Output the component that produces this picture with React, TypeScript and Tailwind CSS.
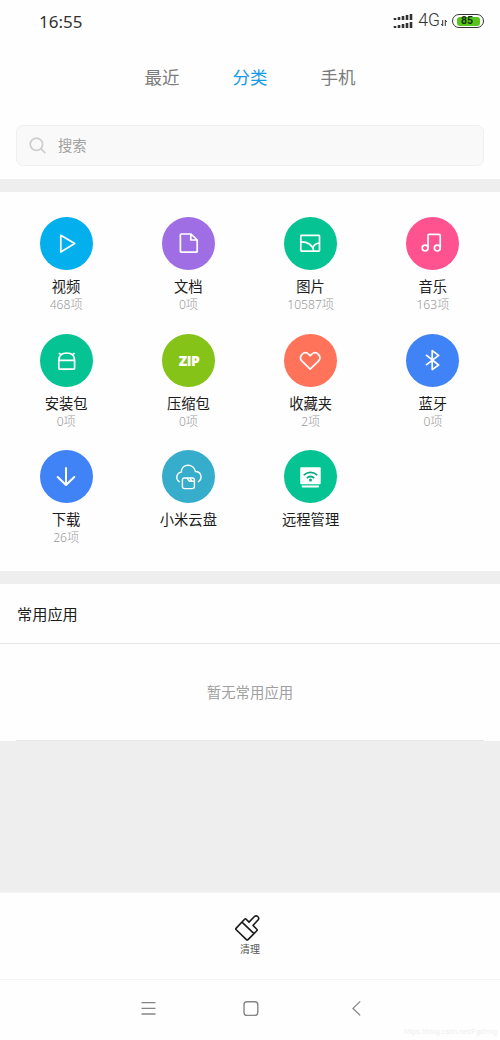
import type { ReactNode } from 'react';

type Category = { label: string; count?: string; color: string; icon: ReactNode };

const categories: Category[] = [
  {
    label: '视频', count: '468项', color: 'bg-[#03afec]',
    icon: <path d="M20.8 18.3v16.8L34.7 26.6z" />,
  },
  {
    label: '文档', count: '0项', color: 'bg-[#9f6ee4]',
    icon: <path d="M29 17H19.2a.8.8 0 0 0-.8.8v16.6a.8.8 0 0 0 .8.8H34.4a.8.8 0 0 0 .8-.8V23zM28.8 17v6H35" />,
  },
  {
    label: '图片', count: '10587项', color: 'bg-[#05c393]',
    icon: (
      <>
        <rect x="16.8" y="18.3" width="18.7" height="15.8" rx=".8" />
        <path d="M17 24.8c7 0 11.7 3.4 12.8 9.2M29 30.6c1-3 3-4.2 6.5-4.4" />
      </>
    ),
  },
  {
    label: '音乐', count: '163项', color: 'bg-[#ff5390]',
    icon: (
      <>
        <circle cx="19.1" cy="31.1" r="2.9" />
        <circle cx="31.3" cy="31.1" r="2.9" />
        <path d="M22 31V18.5q0-1.2 1.2-1.2h9.8q1.2 0 1.2 1.2V31" />
      </>
    ),
  },
  {
    label: '安装包', count: '0项', color: 'bg-[#05c393]',
    icon: <path d="M18.8 26.4h15.8v7.9a.9.9 0 0 1-.9.9h-14a.9.9 0 0 1-.9-.9zC18.8 21.5 22 19 26.7 19s7.9 2.5 7.9 7.4M21.7 21.1l-2.9-2M31.7 21.1l2.9-2" />,
  },
  {
    label: '压缩包', count: '0项', color: 'bg-[#85c318]',
    icon: (
      <text x="27.2" y="31.5" textAnchor="middle" fill="white" stroke="none" fontSize="13.8" fontWeight="800" fontFamily="Open Sans, Noto Sans, sans-serif" textLength="20.8">ZIP</text>
    ),
  },
  {
    label: '收藏夹', count: '2项', color: 'bg-[#ff735b]',
    icon: <path d="M26.2 35.2 18 27.1C13.8 22.4 20.1 16 24.8 20.3l1.4 1.4 1.4-1.4C32.4 16 38.6 22.4 34.4 27.1z" />,
  },
  {
    label: '蓝牙', count: '0项', color: 'bg-[#4083f6]',
    icon: <path d="M20 20.9 32.6 31 26.2 35.6V16.6l6.4 4.8L20 31.2" />,
  },
  {
    label: '下载', count: '26项', color: 'bg-[#4083f6]',
    icon: <path strokeWidth="2" strokeLinecap="round" d="M26 18v16.5M17.7 27l8.3 8 8.3-8" />,
  },
  {
    label: '小米云盘', color: 'bg-[#35adcb]',
    icon: (
      <g strokeWidth="1.4">
        <path strokeLinecap="round" d="M17.2 31.7c-4-3-2.7-8.8 2-9.6.5-9 12.5-9 14.3-.6 5.8.1 7.5 7 2.9 10.2" />
        <rect x="20.4" y="28" width="12" height="10.6" rx="2" />
        <path d="M25 28.2l2.4 3h4.8M27.8 28.2l2 3" />
      </g>
    ),
  },
  {
    label: '远程管理', color: 'bg-[#05c393]',
    icon: (
      <>
        <rect x="16.2" y="17.3" width="20.5" height="17" rx="1" fill="white" stroke="none" />
        <path d="M17.7 35.4H35v1.2a1 1 0 0 1-1 1H18.7a1 1 0 0 1-1-1z" fill="white" stroke="none" />
        <path className="stroke-[#05a982]" d="M19.7 25.1q6.8-5.4 13.6 0M22.8 28q3.7-3 7.4 0" />
        <circle cx="26.5" cy="30" r="1.5" fill="#05a982" stroke="none" />
      </>
    ),
  },
];

function SignalBars() {
  return (
    <svg className="h-4 w-5" viewBox="0 0 20 16" fill="#333">
      {[0, 1, 2, 3, 4].map((i) => (
        <g key={i}>
          <rect x={0.7 + i * 4} y={5 - i} width="2.6" height={2 + i} />
          <rect x={0.7 + i * 4} y={13 - i} width="2.6" height={2 + i} />
        </g>
      ))}
    </svg>
  );
}

function StatusBar() {
  return (
    <header className="flex h-[42px] items-center pl-[39px] pr-[16px] text-[#333]">
      <span className="text-[17px] leading-none font-['Noto_Sans',sans-serif]">16:55</span>
      <div className="ml-auto flex items-center">
        <SignalBars />
        <span className="ml-[5px] text-[17.5px] font-light leading-none font-['Roboto',sans-serif]">4G</span>
        <svg className="ml-[1px] mt-1 h-[6px] w-[6px]" viewBox="0 0 6 6" fill="none" stroke="#333" strokeWidth="1">
          <path d="M1.7 0v6L.3 4M4.3 6V0l1.4 2" />
        </svg>
        <div className="ml-[5px] flex h-[14px] w-[32px] items-center justify-center rounded-full border-[1.5px] border-[#333]">
          <div className="flex h-[9px] w-[23px] items-center justify-center rounded-[3px] bg-[#58c51e] pr-[2px] text-[10.5px] font-bold leading-none text-[#15300c] font-['Roboto',sans-serif]">85</div>
        </div>
      </div>
    </header>
  );
}

export default function App() {
  return (
    <div className="flex h-[1040px] w-[500px] flex-col overflow-hidden bg-[#fefefe] font-['Noto_Sans_CJK_SC',sans-serif]">
      <StatusBar />

      <nav className="flex h-[70px] justify-center gap-[53px] text-[17.5px] leading-[70px] text-[#7c7c7c]">
        <span>最近</span>
        <span className="text-[#189ae8]">分类</span>
        <span>手机</span>
      </nav>

      <div className="h-[67px] px-4 pt-[13px]">
        <div className="flex h-[41px] items-center rounded-[7px] border border-[#efefef] bg-[#f9f9f9] pl-3 text-[14.3px] text-[#a0a0a0]">
          <svg className="-mt-px h-[17px] w-[17px]" viewBox="0 0 16 16" fill="none" stroke="#cecece" strokeWidth="1.6">
            <circle cx="7" cy="6.8" r="5.8" />
            <path d="m11.2 11 4.2 4.2" />
          </svg>
          <span className="ml-[12px] -mt-px">搜索</span>
        </div>
      </div>

      <div className="h-[13px] bg-[#eee]" />

      <section className="grid h-[379px] auto-rows-[116.6px] grid-cols-4 pl-[5px] pr-[6px] pt-[25px]">
        {categories.map((c) => (
          <div key={c.label} className="flex flex-col items-center">
            <div className={`h-[53px] w-[53px] rounded-full ${c.color}`}>
              <svg className="h-full w-full" viewBox="0 0 53 53" fill="none" stroke="white" strokeWidth="1.7" strokeLinejoin="round">
                {c.icon}
              </svg>
            </div>
            <div className="mt-[6px] text-[14.3px] leading-5 text-[#1c1c1c]">{c.label}</div>
            {c.count && <div className="mt-px text-[12.1px] font-light leading-4 text-[#999] font-['Noto_Sans','Noto_Sans_CJK_SC',sans-serif]">{c.count}</div>}
          </div>
        ))}
      </section>

      <div className="h-[13px] bg-[#eee]" />

      <h2 className="h-[60px] border-b border-[#e6e6e6] pl-[17px] text-[15.2px] font-normal leading-[59px] text-[#1c1c1c]">常用应用</h2>
      <div className="h-[97px] px-4">
        <div className="h-full border-b border-[#e6e6e6] text-center text-[14.4px] leading-[96px] text-[#a0a0a0]">暂无常用应用</div>
      </div>
      <div className="h-[151px] bg-[#eee]" />

      <div className="flex h-[88px] flex-col items-center border-y border-y-[#f5f5f5] pt-[22px]">
        <svg className="mr-[4px] h-[26px] w-[26px]" viewBox="0 0 26 26" fill="none" stroke="#1a1a1a" strokeWidth="1.6" strokeLinejoin="round">
          <path d="M1 13.4 9.6 4.2q.8-.8 1.6 0l2.8 2.9 5.7-5.8q1.5-1 3 .2 1.8 1.4.5 3.2L18 10.5l3.8 3.7q.8.8 0 1.6L13 24.6q-.8.7-1.6 0L1 14.5q-.6-.5 0-1.1zM7 7.1l12 11.5" />
        </svg>
        <span className="text-[10px] leading-4 text-[#555]">清理</span>
      </div>

      <footer className="relative flex h-[60px] pl-[141px] pt-[20px]">
        <svg className="h-4 w-[15px]" viewBox="0 0 15 16" stroke="#858585" strokeWidth="1.3">
          <path d="M.5 2.7h14M.5 8.4h14M.5 14h14" />
        </svg>
        <svg className="ml-[87px] h-4 w-4" viewBox="0 0 16 16" fill="none" stroke="#858585" strokeWidth="1.4">
          <rect x="1" y="1.7" width="13.8" height="13.8" rx="3" />
        </svg>
        <svg className="ml-[93px] h-4 w-[9px]" viewBox="0 0 9 16" fill="none" stroke="#858585" strokeWidth="1.3">
          <path d="M8.2 1.4 1 8.4l7.2 7" />
        </svg>
        <span className="absolute bottom-[3px] right-[3px] text-[7.3px] leading-[11px] text-[#eee] font-['Liberation_Sans',sans-serif]">https://blog.csdn.net/FgdYng</span>
      </footer>
    </div>
  );
}
